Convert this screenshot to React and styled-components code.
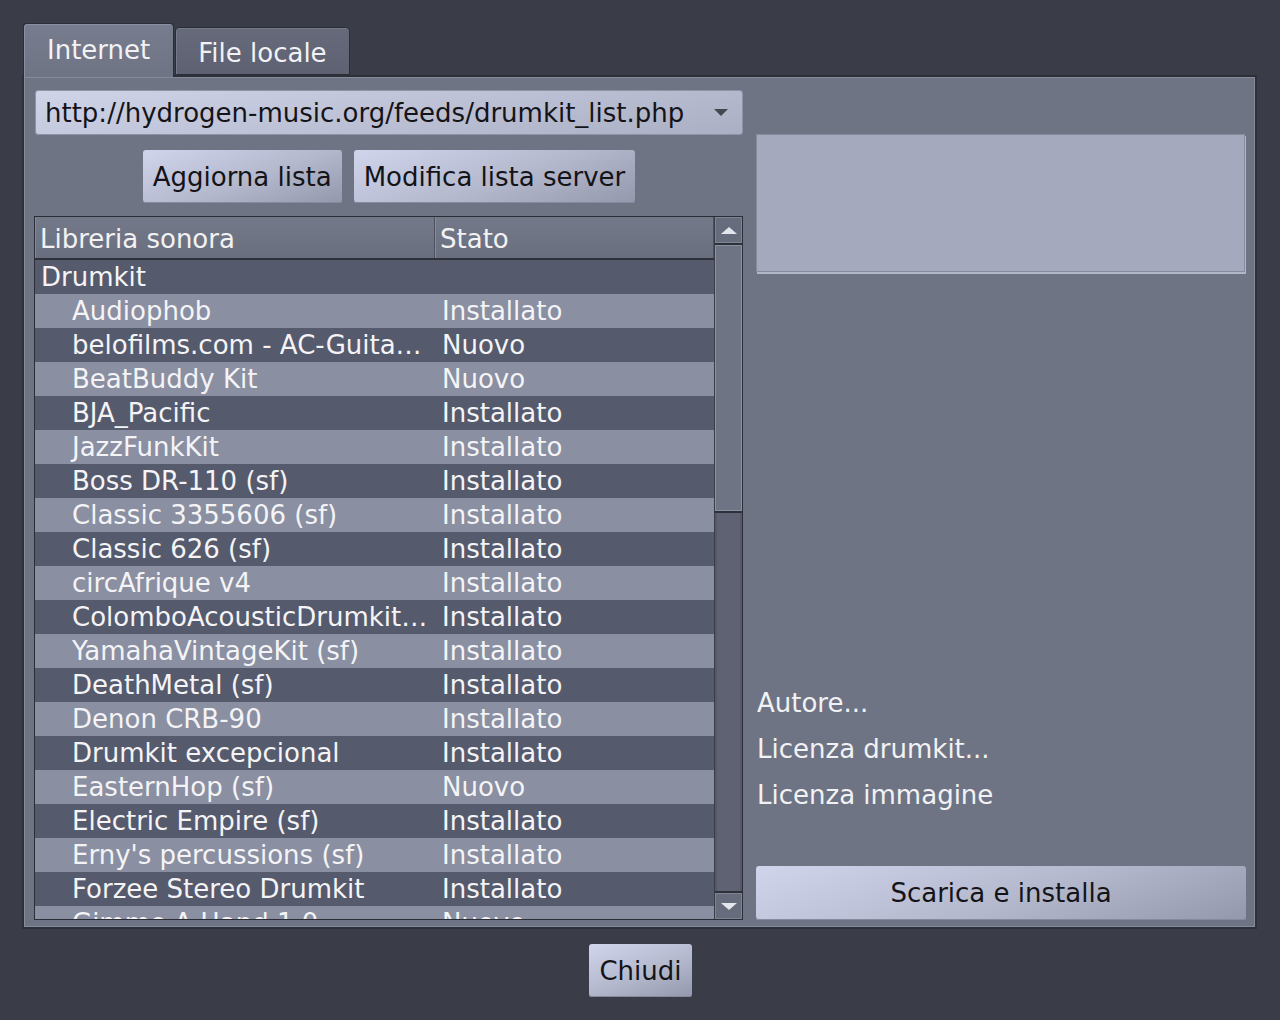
import React from 'react'
import styled, { createGlobalStyle } from 'styled-components'

const drumkits = [
  { name: 'Audiophob', status: 'Installato' },
  { name: 'belofilms.com - AC-Guita…', status: 'Nuovo' },
  { name: 'BeatBuddy Kit', status: 'Nuovo' },
  { name: 'BJA_Pacific', status: 'Installato' },
  { name: 'JazzFunkKit', status: 'Installato' },
  { name: 'Boss DR-110 (sf)', status: 'Installato' },
  { name: 'Classic 3355606 (sf)', status: 'Installato' },
  { name: 'Classic 626 (sf)', status: 'Installato' },
  { name: 'circAfrique v4', status: 'Installato' },
  { name: 'ColomboAcousticDrumkit…', status: 'Installato' },
  { name: 'YamahaVintageKit (sf)', status: 'Installato' },
  { name: 'DeathMetal (sf)', status: 'Installato' },
  { name: 'Denon CRB-90', status: 'Installato' },
  { name: 'Drumkit excepcional', status: 'Installato' },
  { name: 'EasternHop (sf)', status: 'Nuovo' },
  { name: 'Electric Empire (sf)', status: 'Installato' },
  { name: "Erny's percussions (sf)", status: 'Installato' },
  { name: 'Forzee Stereo Drumkit', status: 'Installato' },
  { name: 'Gimme A Hand 1.0', status: 'Nuovo' }
]

function App () {
  return (
    <>
      <GlobalStyle />
      <Page>
        <TabBar>
          <Tab active>Internet</Tab>
          <Tab>File locale</Tab>
        </TabBar>

        <Pane>
          <LeftColumn>
            <Combo>
              <span>http://hydrogen-music.org/feeds/drumkit_list.php</span>
              <ComboArrow />
            </Combo>

            <ButtonRow>
              <Button>Aggiorna lista</Button>
              <Button>Modifica lista server</Button>
            </ButtonRow>

            <Table>
              <TableMain>
                <Header>
                  <HeaderCell width={400}>Libreria sonora</HeaderCell>
                  <HeaderCell>Stato</HeaderCell>
                </Header>
                <Body>
                  <Row dark>
                    <NameCell group>Drumkit</NameCell>
                    <StatusCell />
                  </Row>
                  {drumkits.map((kit, i) => (
                    <Row key={kit.name} dark={i % 2 === 1}>
                      <NameCell>{kit.name}</NameCell>
                      <StatusCell>{kit.status}</StatusCell>
                    </Row>
                  ))}
                </Body>
              </TableMain>

              <ScrollBar>
                <ScrollButton>
                  <Arrow up />
                </ScrollButton>
                <ScrollHandle />
                <ScrollTrough />
                <ScrollButton down>
                  <Arrow />
                </ScrollButton>
              </ScrollBar>
            </Table>
          </LeftColumn>

          <RightColumn>
            <Preview />
            <Spacer />
            <InfoLabel>Autore...</InfoLabel>
            <InfoLabel>Licenza drumkit...</InfoLabel>
            <InfoLabel>Licenza immagine</InfoLabel>
            <Button wide>Scarica e installa</Button>
          </RightColumn>
        </Pane>

        <Footer>
          <Button>Chiudi</Button>
        </Footer>
      </Page>
    </>
  )
}

const GlobalStyle = createGlobalStyle`
  html, body {
    margin: 0;
    padding: 0;
    background: #3a3d48;
  }

  body {
    font-family: "DejaVu Sans", "Liberation Sans", sans-serif;
    font-size: 26px;
  }
`

const Page = styled.div`
  box-sizing: border-box;
  display: flex;
  flex-direction: column;
  height: 1020px;
  padding: 23px 23px 0 22px;
  width: 1280px;
`

const TabBar = styled.div`
  align-items: flex-end;
  display: flex;
  gap: 1px;
  height: 52px;
  padding-left: 1px;
  position: relative;
  z-index: 1;
`

const Tab = styled.div`
  align-items: center;
  background: ${({ active }) => active
    ? 'linear-gradient(#777c8e, #6f7485)'
    : 'linear-gradient(#666a7b, #5d6172)'};
  border: 1px solid #2b2e37;
  border-bottom: ${({ active }) => active ? 'none' : '1px solid #2b2e37'};
  border-radius: 4px 4px 0 0;
  box-shadow: inset 1px 1px 0 ${({ active }) => active ? '#8a8fa1' : '#757a8b'};
  box-sizing: border-box;
  color: #f2f2f4;
  display: flex;
  height: ${({ active }) => active ? '54px' : '48px'};
  margin-bottom: ${({ active }) => active ? '-2px' : '0'};
  padding: ${({ active }) => active ? '0 23px 1px' : '4px 22px 0'};
`

const Pane = styled.div`
  background: #6f7485;
  border: 2px solid #2d3039;
  box-shadow: inset 1px 1px 0 #868b9c, inset -1px -1px 0 #868b9c;
  box-sizing: border-box;
  display: grid;
  gap: 13px;
  grid-template-columns: 708px 490px;
  height: 854px;
  padding: 13px 9px 7px 11px;
  width: 1235px;
`

const LeftColumn = styled.div`
  display: flex;
  flex-direction: column;
  min-height: 0;
`

const RightColumn = styled.div`
  display: flex;
  flex-direction: column;
  padding-top: 44px;
`

const lightGradient = 'linear-gradient(160deg, #d1d5ec 0%, #b4b8cd 55%, #9498ac 100%)'

const Combo = styled.div`
  align-items: center;
  background: linear-gradient(170deg, #d0d4e8, #abafc3);
  border: 1px solid #8e93a5;
  border-radius: 3px;
  box-sizing: border-box;
  color: #141418;
  display: flex;
  height: 45px;
  justify-content: space-between;
  padding: 0 14px 0 9px;
`

const ComboArrow = styled.span`
  border-left: 7px solid transparent;
  border-right: 7px solid transparent;
  border-top: 7px solid #45474f;
  height: 0;
  width: 0;
`

const ButtonRow = styled.div`
  display: flex;
  gap: 12px;
  justify-content: center;
  margin: 15px 0 13px;
`

const Button = styled.button`
  background: ${lightGradient};
  border: none;
  border-radius: 3px;
  box-shadow: inset 0 -1px 0 #858a9c;
  color: #141418;
  font-family: inherit;
  font-size: 26px;
  height: ${({ wide }) => wide ? '54px' : '53px'};
  margin-top: ${({ wide }) => wide ? '48px' : '0'};
  padding: 0 10px;
  width: ${({ wide }) => wide ? '100%' : 'auto'};
`

const Table = styled.div`
  border: 1px solid #2b2e37;
  box-sizing: border-box;
  display: flex;
  height: 704px;
  margin-left: -1px;
  overflow: hidden;
`

const TableMain = styled.div`
  display: flex;
  flex: 1;
  flex-direction: column;
  min-width: 0;
`

const Header = styled.div`
  background: linear-gradient(#747989, #6a6f80);
  border-bottom: 2px solid #2e313a;
  display: flex;
  flex-shrink: 0;
  height: 41px;
`

const HeaderCell = styled.div`
  border-left: 1px solid #868b9c;
  border-right: 1px solid #4c505f;
  box-sizing: border-box;
  color: #f2f2f4;
  flex: ${({ width }) => width ? `0 0 ${width}px` : '1'};
  line-height: 41px;
  padding: 2px 0 0 4px;
`

const Body = styled.div`
  flex: 1;
  overflow: hidden;
`

const Row = styled.div`
  background: ${({ dark }) => dark ? '#565a6d' : '#8a8fa2'};
  color: #f4f4f6;
  display: flex;
  height: 34px;
  line-height: 34px;
`

const NameCell = styled.div`
  box-sizing: border-box;
  flex: 0 0 398px;
  overflow: hidden;
  padding-left: ${({ group }) => group ? '6px' : '37px'};
  white-space: nowrap;
`

const StatusCell = styled.div`
  flex: 1;
  padding-left: 9px;
  white-space: nowrap;
`

const ScrollBar = styled.div`
  background: #5e6273;
  border-left: 1px solid #3a3d48;
  box-sizing: border-box;
  display: flex;
  flex: 0 0 28px;
  flex-direction: column;
`

const ScrollButton = styled.div`
  align-items: center;
  background: #676c7d;
  border-bottom: ${({ down }) => down ? 'none' : '2px solid #2e313a'};
  border-top: ${({ down }) => down ? '2px solid #2e313a' : 'none'};
  box-shadow: inset 0 0 0 1px #7e8395;
  display: flex;
  flex-shrink: 0;
  height: 26px;
  justify-content: center;
`

const Arrow = styled.span`
  border-left: 8px solid transparent;
  border-right: 8px solid transparent;
  border-bottom: ${({ up }) => up ? '7px solid #e4e6ee' : 'none'};
  border-top: ${({ up }) => up ? 'none' : '7px solid #e4e6ee'};
  height: 0;
  width: 0;
`

const ScrollHandle = styled.div`
  background: #6f7485;
  border-bottom: 2px solid #2e313a;
  box-shadow: inset 0 0 0 1px #8d92a3;
  flex-shrink: 0;
  height: 266px;
`

const ScrollTrough = styled.div`
  box-shadow: inset 2px 0 0 #555969, inset -2px 0 0 #555969;
  flex: 1;
`

const Preview = styled.div`
  background: #a4a9bd;
  border: 1px solid #878b9e;
  box-shadow: 1px 2px 0 #b2b6c6;
  flex-shrink: 0;
  height: 136px;
  margin-right: 1px;
`

const Spacer = styled.div`
  flex: 1;
`

const InfoLabel = styled.div`
  color: #f2f2f4;
  line-height: 46px;
  padding-left: 1px;
`

const Footer = styled.div`
  display: flex;
  justify-content: center;
  padding-top: 15px;
  padding-left: 2px;
`

export default App
